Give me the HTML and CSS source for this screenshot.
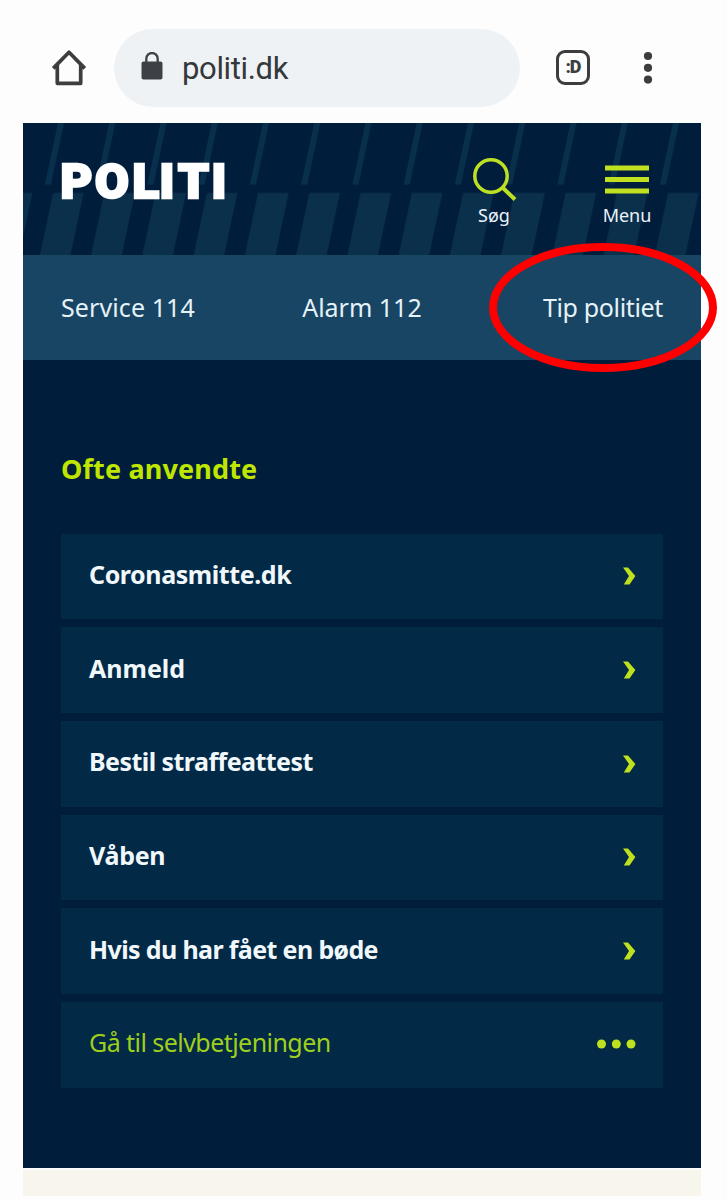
FILE: index.html
```html
<!DOCTYPE html>
<html lang="da">
<head>
<meta charset="utf-8">
<title>politi.dk</title>
<link rel="stylesheet" href="styles.css">
</head>
<body>
<div class="browser-bar">
  <svg class="home" width="36" height="38" viewBox="0 0 36 38" fill="none" stroke="#3c3d3f" stroke-width="3.7" stroke-linejoin="round"><path d="M2.200 19.400 18 3.200 33.800 19.400M6.300 16V34.300H29.700V16"/></svg>
  <div class="address">
    <svg class="lock" width="22" height="28" viewBox="0 0 22 28"><rect x="0.500" y="9.500" width="21" height="18" rx="2" fill="#3d4145"/><path d="M5.300 11V6.700a5.700 5.700 0 0 1 11.400 0V11" fill="none" stroke="#3d4145" stroke-width="2.300"/></svg>
    <span class="url">politi.dk</span>
  </div>
  <div class="tabs">:D</div>
  <svg class="more" width="10" height="34" viewBox="0 0 10 34" fill="#3c3d3f"><circle cx="5" cy="5" r="4.100"/><circle cx="5" cy="16.800" r="4.100"/><circle cx="5" cy="28.600" r="4.100"/></svg>
</div>
<div class="site">
  <header class="header">
    <svg class="stripes" width="678" height="132">
      <defs><pattern id="stripe" patternUnits="userSpaceOnUse" x="30" y="0" width="51.250" height="132" patternTransform="skewX(-12)"><rect x="5" width="6" height="61.500" fill="#08304c"/><rect x="15" y="70" width="30.500" height="62" fill="#0a304c"/></pattern></defs>
      <rect width="678" height="132" fill="url(#stripe)"/>
    </svg>
    <svg class="logo" width="180" height="70" viewBox="-4 -14 180 70"><text y="38.300" x="-0.500 34 71.500 98.500 117 150.500">POLITI</text></svg>
    <div class="actions">
      <div class="action search">
        <svg width="44" height="44" viewBox="0 0 44 44" fill="none" stroke="#bde025" stroke-width="3.500"><circle cx="18" cy="18" r="16.200"/><path d="M29.500 29.500 42 41.500" stroke-width="4"/></svg>
        <span>Søg</span>
      </div>
      <div class="action menu">
        <svg width="44" height="44" viewBox="0 0 44 44" fill="#c0e020"><path d="M0 7.500h44v5H0zM0 19h44v5H0zM0 30.500h44v5H0z"/></svg>
        <span>Menu</span>
      </div>
    </div>
  </header>
  <nav class="nav"><span class="service">Service 114</span><span class="alarm">Alarm 112</span><span class="tip">Tip politiet</span></nav>
  <main class="main">
    <h1>Ofte anvendte</h1>
    <div class="list">
      <div class="row"><span class="t1">Coronasmitte.dk</span><svg class="chev" width="14" height="20" viewBox="0 0 14 20"><path d="M1 1.500h5L13.400 10 7.500 18.500H1.800L7 10z" fill="#bfe01e"/></svg></div>
      <div class="row"><span class="t2">Anmeld</span><svg class="chev" width="14" height="20" viewBox="0 0 14 20"><path d="M1 1.500h5L13.400 10 7.500 18.500H1.800L7 10z" fill="#bfe01e"/></svg></div>
      <div class="row"><span class="t3">Bestil straffeattest</span><svg class="chev" width="14" height="20" viewBox="0 0 14 20"><path d="M1 1.500h5L13.400 10 7.500 18.500H1.800L7 10z" fill="#bfe01e"/></svg></div>
      <div class="row"><span class="t4">Våben</span><svg class="chev" width="14" height="20" viewBox="0 0 14 20"><path d="M1 1.500h5L13.400 10 7.500 18.500H1.800L7 10z" fill="#bfe01e"/></svg></div>
      <div class="row"><span class="t5">Hvis du har fået en bøde</span><svg class="chev" width="14" height="20" viewBox="0 0 14 20"><path d="M1 1.500h5L13.400 10 7.500 18.500H1.800L7 10z" fill="#bfe01e"/></svg></div>
      <div class="row all"><span class="t6">Gå til selvbetjeningen</span><svg class="dots" width="40" height="20" viewBox="0 0 40 20" fill="#bfe01e"><circle cx="5.500" cy="9" r="4.500"/><circle cx="20.300" cy="9" r="4.500"/><circle cx="35" cy="9" r="4.500"/></svg></div>
    </div>
  </main>
  <div class="below"></div>
</div>
<svg class="highlight" width="230" height="130" viewBox="0 0 230 130"><ellipse cx="115" cy="65.500" rx="110" ry="60.500" fill="none" stroke="#fe0000" stroke-width="8"/></svg>
</body>
</html>
```

FILE: styles.css
```css
* { box-sizing: border-box; }
body { margin: 0; width: 727px; height: 1200px; position: relative; overflow: hidden; background: #fdfdfd; font-family: "Noto Sans", "Open Sans", sans-serif; }
.browser-bar { height: 123px; padding: 12px 0 0 51px; display: flex; align-items: center; }
.address { width: 406px; height: 78px; margin-left: 27px; border-radius: 39px; background: #eff2f5; display: flex; align-items: center; padding-left: 27px; }
.lock { margin-top: -3px; }
.url { margin: 3px 0 0 19px; font: 31px/36px Roboto, sans-serif; color: #35383b; letter-spacing: -0.35px; }
.tabs { width: 34px; height: 35px; margin-left: 36px; border: 3.5px solid #3c3d3f; border-radius: 9px; color: #3c3d3f; font: 900 18px/27px Roboto, sans-serif; text-align: center; letter-spacing: -1px; }
.more { margin-left: 53px; }
.site { width: 678px; margin-left: 23px; }
.header { height: 132px; background: #001d3c; position: relative; display: flex; justify-content: space-between; padding: 37px 49px 0 38px; }
.stripes { position: absolute; left: 0; top: 0; }
.logo { position: relative; margin: -14px 0 0 -4px; overflow: visible; font: 900 49px Roboto, sans-serif; fill: #fff; stroke: #fff; stroke-width: 2.6; }
.actions { position: relative; display: flex; gap: 85px; margin-top: -2px; }
.action { display: flex; flex-direction: column; align-items: center; color: #eaf3fa; font-size: 18px; line-height: 26px; }
.action svg { display: block; }
.search { width: 44px; }
.search span { margin-left: -2px; }
.menu { width: 50px; }
.nav { height: 105px; padding: 0 38px 2px; background: #194564; color: #e5f2f8; display: flex; align-items: center; justify-content: space-between; font-size: 25px; }
.service { letter-spacing: 0.1px; }
.alarm { margin-right: 14px; }
.tip { letter-spacing: -0.35px; }
.main { height: 808px; padding: 91px 38px 0; background: #001d3c; }
h1 { margin: 0; font-size: 27px; line-height: 36px; color: #bfe600; letter-spacing: 0.15px; }
.list { margin-top: 46.500px; display: grid; gap: 8px; }
.row { height: 85.700px; padding: 0 27px 0 28px; background: #022946; display: flex; align-items: center; justify-content: space-between; color: #f0f8fc; font-size: 25px; line-height: 34px; font-weight: 700; }
.row span { padding-bottom: 5px; }
.t1 { letter-spacing: -0.42px; }
.t3 { letter-spacing: -0.55px; }
.t4 { letter-spacing: -0.3px; }
.t5 { letter-spacing: -0.63px; }
.t6 { letter-spacing: -0.55px; }
.all { font-weight: 400; color: #9fcf1c; }
.below { margin-top: 2px; height: 26px; background: #f8f5ed; }
.highlight { position: absolute; left: 488px; top: 242px; }
```
